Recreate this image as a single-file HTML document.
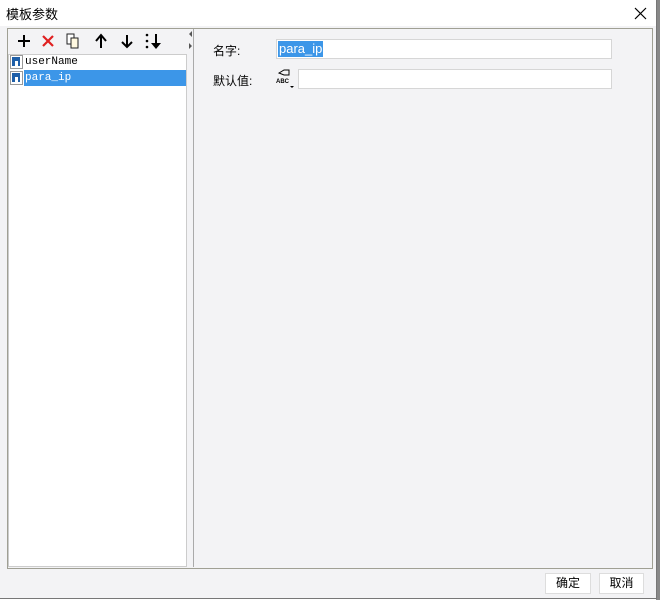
<!DOCTYPE html><html><head><style>
body{margin:0;width:660px;height:600px;background:#fff;position:relative;overflow:hidden;font-family:"Liberation Sans","Noto Sans CJK SC",sans-serif;font-size:12px}
.a{position:absolute}
</style></head><body>
<div class="a" style="left:656px;top:0;width:4px;height:600px;background:#888"></div>
<div class="a" style="left:0;top:0;width:656px;height:598px;background:#f3f3f5;border-right:1px solid #777;border-bottom:1px solid #777"></div>
<div class="a" style="left:0;top:0;width:656px;height:26px;background:#fff"></div>
<div class="a" style="left:6px;top:4px;font-size:13px">模板参数</div>
<svg class="a" style="left:634px;top:7px" width="13" height="13"><path d="M1 1L12 12M12 1L1 12" stroke="#000" stroke-width="1.2"/></svg>
<div class="a" style="left:7px;top:28px;width:644px;height:539px;border:1px solid #a0a094;background:#f3f3f5"></div>
<div class="a" style="left:8px;top:54px;width:177px;height:511px;background:#fff;border:1px solid #ccc"></div>
<div class="a" style="left:187px;top:29px;width:6px;height:538px;background:#f3f3f5;border-right:1px solid #aaa"></div>
<svg class="a" style="left:187px;top:31px" width="6" height="20"><path d="M5 0L2 3L5 6Z M2 12L5 15L2 18Z" fill="#555"/></svg>
<svg class="a" style="left:14px;top:32px" width="150" height="18">
<path d="M4 9H16M10 3V15" stroke="#000" stroke-width="2"/>
<path d="M29 4L39 14M39 4L29 14" stroke="#e02020" stroke-width="2.2"/>
<rect x="53" y="2" width="7" height="10" fill="#fff" stroke="#222"/><rect x="57" y="6" width="7" height="10" fill="#fff8e0" stroke="#222"/>
<path d="M87 16V4M82 9L87 3L92 9" stroke="#000" stroke-width="2" fill="none"/>
<path d="M113 3V14M108 10L113 15L118 10" stroke="#000" stroke-width="2" fill="none"/>
<circle cx="133" cy="3" r="1.3"/><circle cx="133" cy="9" r="1.3"/><circle cx="133" cy="15" r="1.3"/>
<path d="M141 2V11H137L142 17L147 11H143V2Z" fill="#000"/>
</svg>
<div class="a" style="left:24px;top:70px;width:162px;height:16px;background:#3c96e8"></div>
<svg class="a" style="left:10px;top:55px" width="14" height="32">
<rect x="0.5" y="0.5" width="12" height="13" fill="#fff" stroke="#999"/><rect x="2" y="2" width="8" height="9" fill="#1f5fa8"/><rect x="5" y="6" width="3" height="5" fill="#fff"/>
<rect x="0.5" y="16.5" width="12" height="13" fill="#fff" stroke="#999"/><rect x="2" y="18" width="8" height="9" fill="#1f5fa8"/><rect x="5" y="22" width="3" height="5" fill="#fff"/>
</svg>
<div class="a" style="left:25px;top:56px;font-family:'Liberation Mono',monospace;font-size:11px">userName</div>
<div class="a" style="left:25px;top:72px;font-family:'Liberation Mono',monospace;font-size:11px;color:#fff">para_ip</div>
<div class="a" style="left:213px;top:42px">名字:</div>
<div class="a" style="left:213px;top:72px">默认值:</div>
<div class="a" style="left:276px;top:39px;width:334px;height:18px;background:#fff;border:1px solid #d6d6d6"></div>
<div class="a" style="left:278px;top:41px;height:16px;padding:0 1px;background:#3c96e8;color:#fff;font-size:13px;line-height:16px">para_ip</div>
<div class="a" style="left:298px;top:69px;width:312px;height:18px;background:#fff;border:1px solid #d6d6d6"></div>
<svg class="a" style="left:275px;top:69px" width="20" height="20"><path d="M4 4L9 1H14V6H9Z" fill="none" stroke="#000"/><text x="1" y="14" font-size="6" font-family="Liberation Sans" font-weight="bold">ABC</text><path d="M15 17H19L17 19Z"/></svg>
<div class="a" style="left:545px;top:573px;width:44px;height:19px;background:#fff;border:1px solid #ddd;text-align:center;line-height:19px">确定</div>
<div class="a" style="left:599px;top:573px;width:43px;height:19px;background:#fff;border:1px solid #ddd;text-align:center;line-height:19px">取消</div>
</body></html>
